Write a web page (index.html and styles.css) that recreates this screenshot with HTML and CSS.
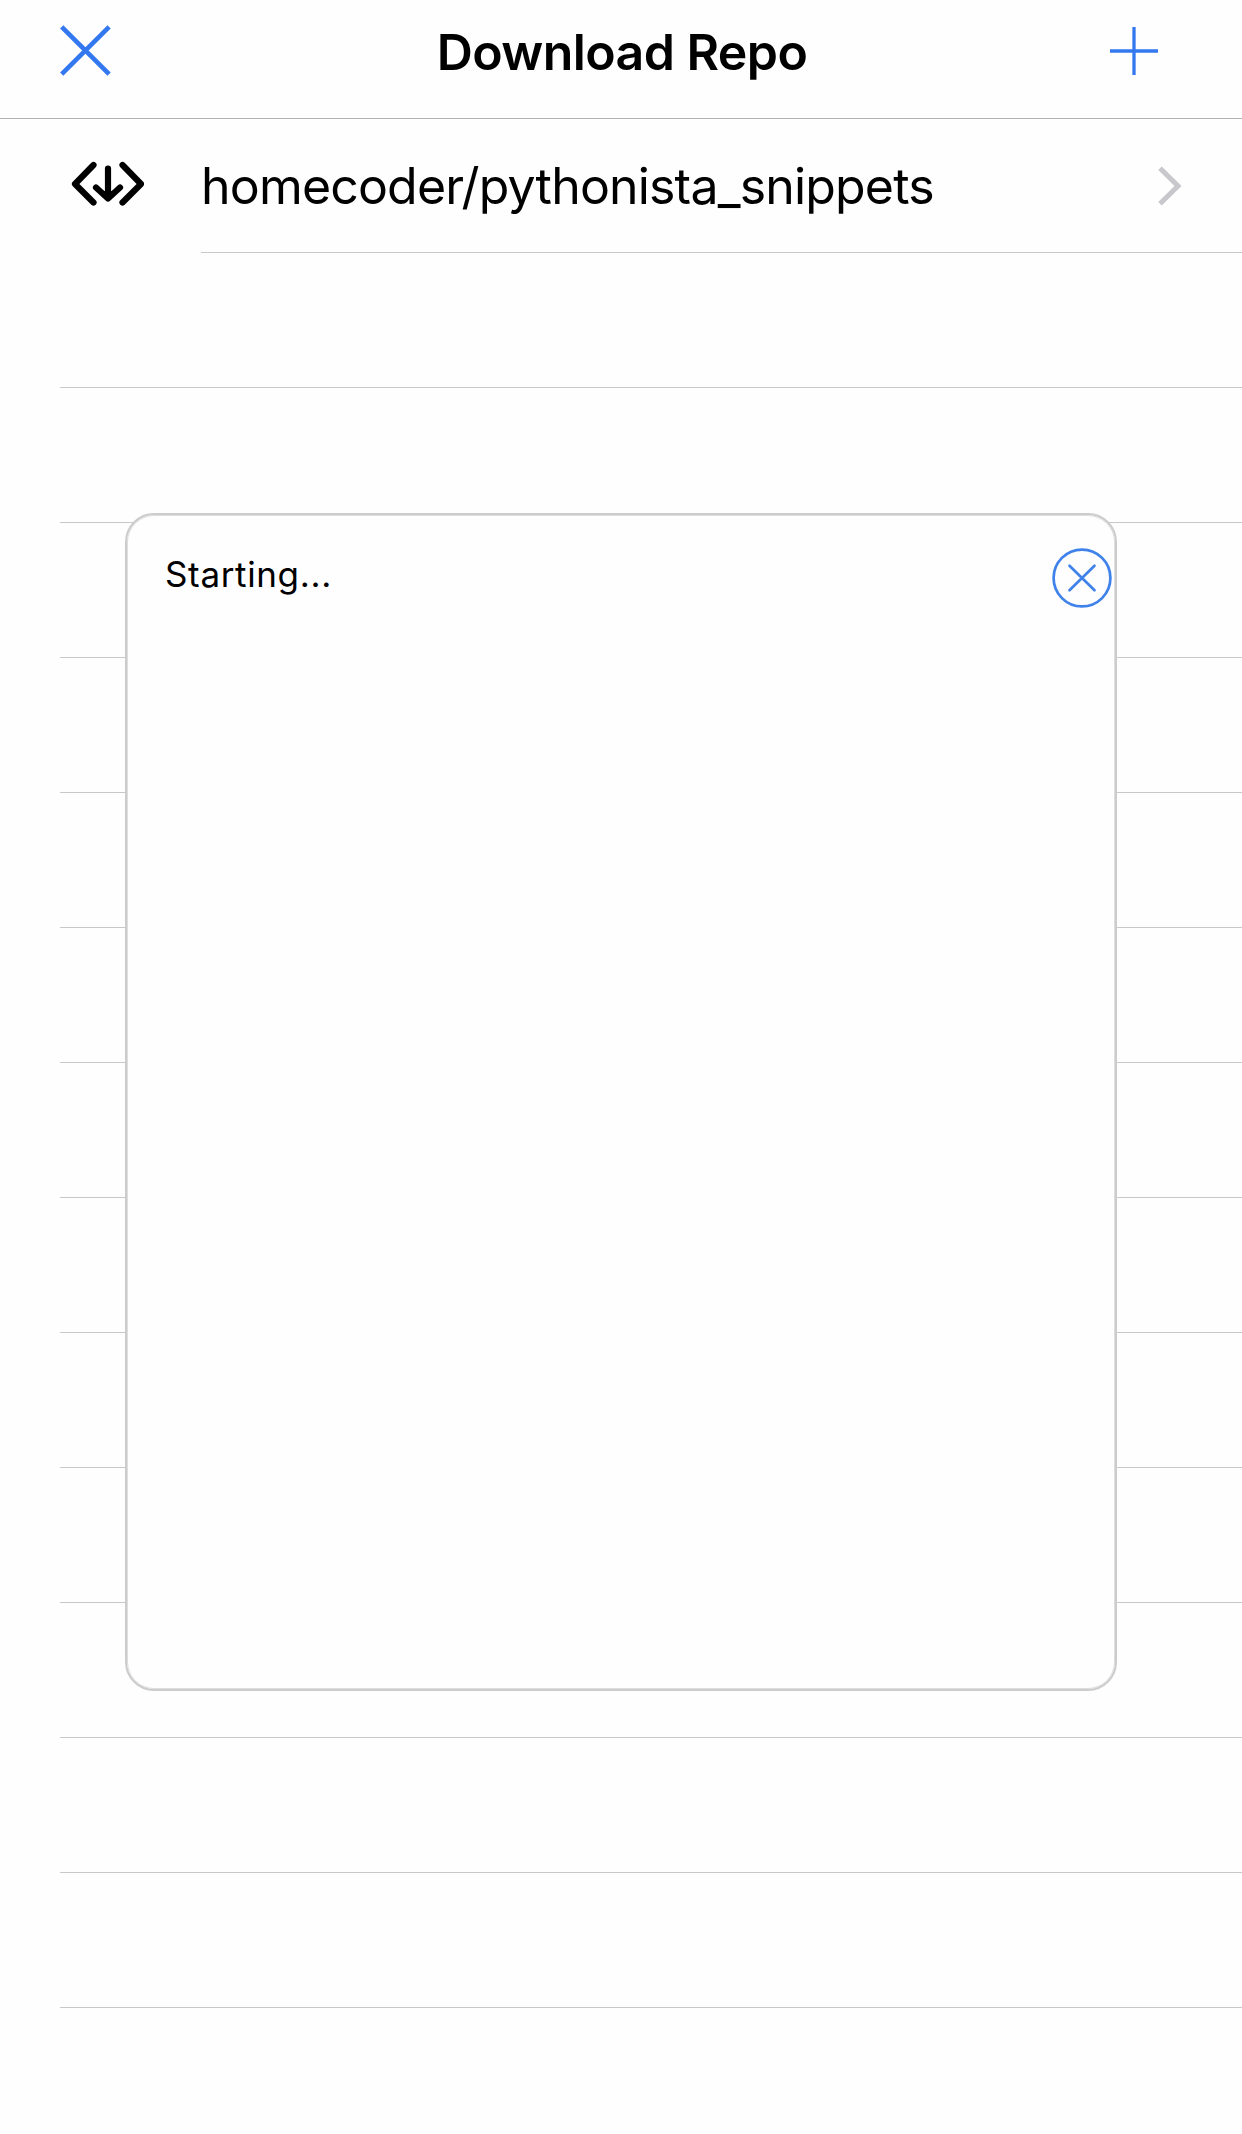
FILE: index.html
```html
<!DOCTYPE html>
<html lang="en">
<head>
<meta charset="utf-8">
<title>Download Repo</title>
<link rel="stylesheet" href="styles.css">
</head>
<body>
<header class="navbar">
  <button class="nav-button" aria-label="Close">
    <svg width="52" height="52" viewBox="0 0 52 52"><path d="M2.7 1.8 50.1 49.2M50.1 1.8 2.7 49.2" stroke-width="4.6"/></svg>
  </button>
  <h1 class="title">Download Repo</h1>
  <button class="nav-button add" aria-label="Add">
    <svg width="52" height="52" viewBox="0 0 52 52"><path d="M26 2V50M2 26H50" stroke-width="3.3"/></svg>
  </button>
</header>
<main>
  <ul class="list">
    <li class="row repo">
      <svg class="repo-icon" width="76" height="46" viewBox="0 0 76 46"><path d="M25.5 4 7 23 25.5 41.5M54.5 4 73 23 54.5 41.5M40 7.5V37M28 26.5 40 37.5 52 26.5"/><path class="tip" d="M32 30 40 37.5 48 30 40 32Z"/></svg>
      <div class="repo-body">
        <span class="repo-name">homecoder/pythonista_snippets</span>
        <svg class="chevron" width="24" height="40" viewBox="0 0 24 40"><path d="M2 2.2 20 20 2 37.8"/></svg>
      </div>
    </li>
    <li class="row"></li><li class="row"></li><li class="row"></li><li class="row"></li>
    <li class="row"></li><li class="row"></li><li class="row"></li><li class="row"></li>
    <li class="row"></li><li class="row"></li><li class="row"></li><li class="row"></li>
    <li class="row"></li>
  </ul>
</main>
<section class="dialog" role="dialog" aria-label="Progress">
  <p class="status">Starting...</p>
  <button class="dismiss" aria-label="Dismiss">
    <svg width="62" height="62" viewBox="0 0 62 62"><circle cx="31" cy="31" r="28.4"/><path d="M18.5 18.8 43.5 43.2M43.5 18.8 18.5 43.2"/></svg>
  </button>
</section>
</body>
</html>
```
FILE: styles.css
```css
* { box-sizing: border-box; }

body {
  margin: 0;
  height: 2134px;
  overflow: hidden;
  position: relative;
  background: #fefefe;
  color: #000;
  font-family: Inter, "Liberation Sans", sans-serif;
}

svg { display: block; fill: none; }

button {
  padding: 0;
  border: 0;
  background: none;
}

.navbar {
  display: flex;
  justify-content: space-between;
  height: 119px;
  padding: 25px 82px 0 59px;
  border-bottom: 1px solid #b2b2b2;
}

.nav-button { height: 52px; stroke: #3478f0; stroke-linecap: butt; }

.title {
  margin: -3px 0 0 25px;
  font-size: 50px;
  font-weight: 600;
  line-height: 60px;
  letter-spacing: -0.58px;
  white-space: nowrap;
}

.list { margin: 0; padding: 0; list-style: none; }

.row {
  height: 135px;
  margin-left: 60px;
  border-bottom: 1px solid #c8c7cc;
}

.repo {
  display: flex;
  height: 134px;
  margin-left: 68px;
  border-bottom: 0;
}

.repo-icon {
  flex: none;
  margin-top: 42px;
  stroke: #000;
  stroke-width: 6.2;
  stroke-linecap: round;
  stroke-linejoin: round;
}

.repo-icon .tip { fill: #000; stroke-width: 2; }

.repo-body {
  flex: 1;
  display: flex;
  align-items: center;
  justify-content: space-between;
  margin-left: 57px;
  padding-right: 60px;
  border-bottom: 1px solid #c8c7cc;
}

.repo-name {
  font-size: 50px;
  line-height: 60px;
  letter-spacing: -0.82px;
}

.chevron { stroke: #c7c7cc; stroke-width: 5; }

.dialog {
  position: absolute;
  left: 125px;
  top: 513px;
  width: 992px;
  height: 1178px;
  display: flex;
  justify-content: space-between;
  align-items: flex-start;
  padding: 32px 2px 0 38px;
  border: 2px solid #ccc;
  border-radius: 29px;
  background: #fefefe;
  box-shadow: inset 0 0 0 1px #dedede;
}

.status {
  margin: 6px 0 0;
  font-size: 35px;
  line-height: 42px;
  letter-spacing: 0.65px;
}

.dismiss { stroke: #3f82ea; stroke-width: 2.7; stroke-linecap: round; }
```
